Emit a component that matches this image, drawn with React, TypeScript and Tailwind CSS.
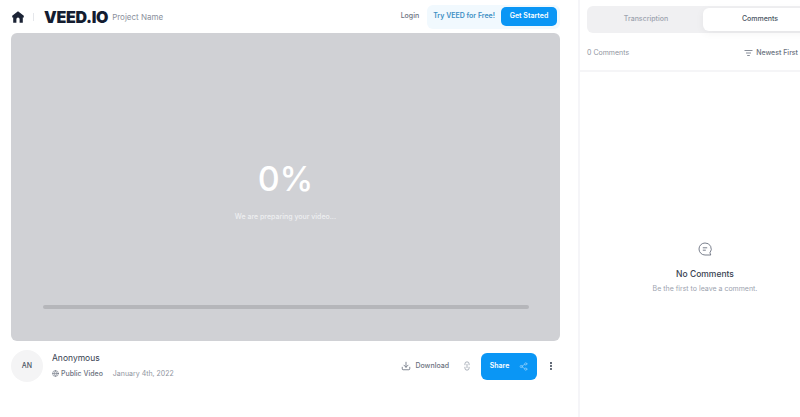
import { Download, Globe, Link2, MoreVertical, Share2 } from "lucide-react";

const font = { fontFamily: "Inter, sans-serif" };

const Header = () => (
    <div className="flex h-[33px] items-center justify-between pl-3 pr-[18px]">
        <div className="flex items-center">
            <svg width="12" height="12" viewBox="0 0 12 12" className="text-[#1b2335]">
                <path
                    fill="currentColor"
                    d="M6 .3 .2 4.8v1.6h1V11.7h3.2V8.2a1.6 1.6 0 0 1 3.2 0v3.5h3.2V6.4h1V4.8L6 .3Z"
                />
            </svg>
            <div className="ml-[9px] h-2 w-px bg-[#e5e7eb]" />
            <div className="ml-[10px] text-[16px] font-black tracking-[-0.3px] text-[#141c30]">VEED.IO</div>
            <div className="ml-1 text-[8px] text-[#8a909c]">Project Name</div>
        </div>
        <div className="flex items-center">
            <div className="mr-[8px] text-[7px] font-medium text-[#6b7280]">Login</div>
            <div className="flex h-[24px] items-center rounded-md bg-[#f1f9fe] pl-[6px] pr-[3px]">
                <div className="mr-[6px] text-[7px] font-semibold text-[#3d8fc4]">Try VEED for Free!</div>
                <div className="flex h-[19px] w-[56px] items-center justify-center rounded-[5px] bg-[#0a96f5] text-[7px] font-semibold text-white">
                    Get Started
                </div>
            </div>
        </div>
    </div>
);

const Player = () => (
    <div className="mx-[11px] flex h-[308px] w-[549px] flex-col items-center rounded-md bg-[#d0d1d5]">
        <div className="mt-[123px] text-[34px] leading-[46px] font-medium text-white">0%</div>
        <div className="mt-[10px] text-[7px] leading-[10px] font-medium text-[#eeeff1]">We are preparing your video...</div>
        <div className="mt-auto mb-[32px] h-1 w-[486px] rounded-full bg-[#b5b6ba]" />
    </div>
);

const VideoInfo = () => (
    <div className="flex items-center justify-between pt-[9px] pr-[22px] pl-[11px]">
        <div className="flex items-center">
            <div className="flex h-8 w-8 items-center justify-center rounded-full bg-[#f4f4f5] text-[7px] font-medium text-[#4b5563]">
                AN
            </div>
            <div className="ml-[9px] -mt-[2px]">
                <div className="text-[8.5px] leading-[12px] text-[#374151]">Anonymous</div>
                <div className="mt-[5px] flex items-center text-[7px] leading-[10px]">
                    <Globe size={7} className="text-[#6b7280]" />
                    <span className="ml-[2px] font-medium text-[#6b7280]">Public Video</span>
                    <span className="ml-[10px] text-[#8f95a0]">January 4th, 2022</span>
                </div>
            </div>
        </div>
        <div className="flex items-center">
            <Download size={10} className="text-[#6b7280]" />
            <span className="ml-[4px] text-[7px] font-medium text-[#6b7280]">Download</span>
            <Link2 size={10} className="ml-[13px] rotate-90 text-[#9ca3af]" />
            <div className="ml-[9px] flex h-[27px] w-[56px] items-center justify-center rounded-md bg-[#0a96f5]">
                <span className="text-[7px] font-semibold text-white">Share</span>
                <Share2 size={9} className="ml-[10px] text-[#8ccdfa]" />
            </div>
            <MoreVertical size={10} strokeWidth={3} className="ml-[9px] text-[#374151]" />
        </div>
    </div>
);

const Sidebar = () => (
    <div className="flex h-full w-[222px] flex-col overflow-hidden border-l-2 border-[#f5f5f8]">
        <div className="mt-[6px] ml-[7px] flex h-[27px] w-[240px] shrink-0 rounded-l-md bg-[#f0f0f2] py-[2px] pl-[2px]">
            <div className="flex w-[114px] items-center justify-center text-[7px] font-medium text-[#9ca3af]">Transcription</div>
            <div className="flex w-[114px] items-center justify-center rounded-md bg-white text-[7px] font-medium text-[#4b5563] shadow-[0_2px_8px_rgba(0,0,0,0.05)]">
                Comments
            </div>
        </div>
        <div className="flex h-[39px] shrink-0 items-center justify-between border-b-2 border-[#f5f5f7] pt-[3px] pr-[2px] pl-[7px]">
            <span className="text-[7px] text-[#8f95a0]">0 Comments</span>
            <div className="flex items-center">
                <svg width="9" height="8" viewBox="0 0 9 8" fill="none" stroke="#6b7280" strokeWidth="0.8">
                    <path d="M.5 1.5h8M2 4h5M3.2 6.5h2.6" />
                </svg>
                <span className="ml-[3px] text-[7px] font-medium text-[#6b7280]">Newest First</span>
            </div>
        </div>
        <div className="flex w-[250px] flex-1 flex-col items-center pt-[170px]">
            <svg width="14" height="14" viewBox="0 0 14 14" fill="none" stroke="#6b7280" strokeWidth="0.9">
                <path d="M7 1a6 6 0 1 0 0 12h5.8l-.9-2.2A6 6 0 0 0 7 1Z" />
                <path d="M4.8 5.8h4.4M4.8 8.2h3" />
            </svg>
            <div className="mt-[12px] text-[8.5px] leading-[12px] font-medium text-[#374151]">No Comments</div>
            <div className="mt-[4px] text-[7px] leading-[10px] text-[#9ca3af]">Be the first to leave a comment.</div>
        </div>
    </div>
);

export default function App() {
    return (
        <div className="flex h-[417px] w-[800px] overflow-hidden bg-white" style={font}>
            <div className="w-[578px] shrink-0">
                <Header />
                <Player />
                <VideoInfo />
            </div>
            <Sidebar />
        </div>
    );
}
